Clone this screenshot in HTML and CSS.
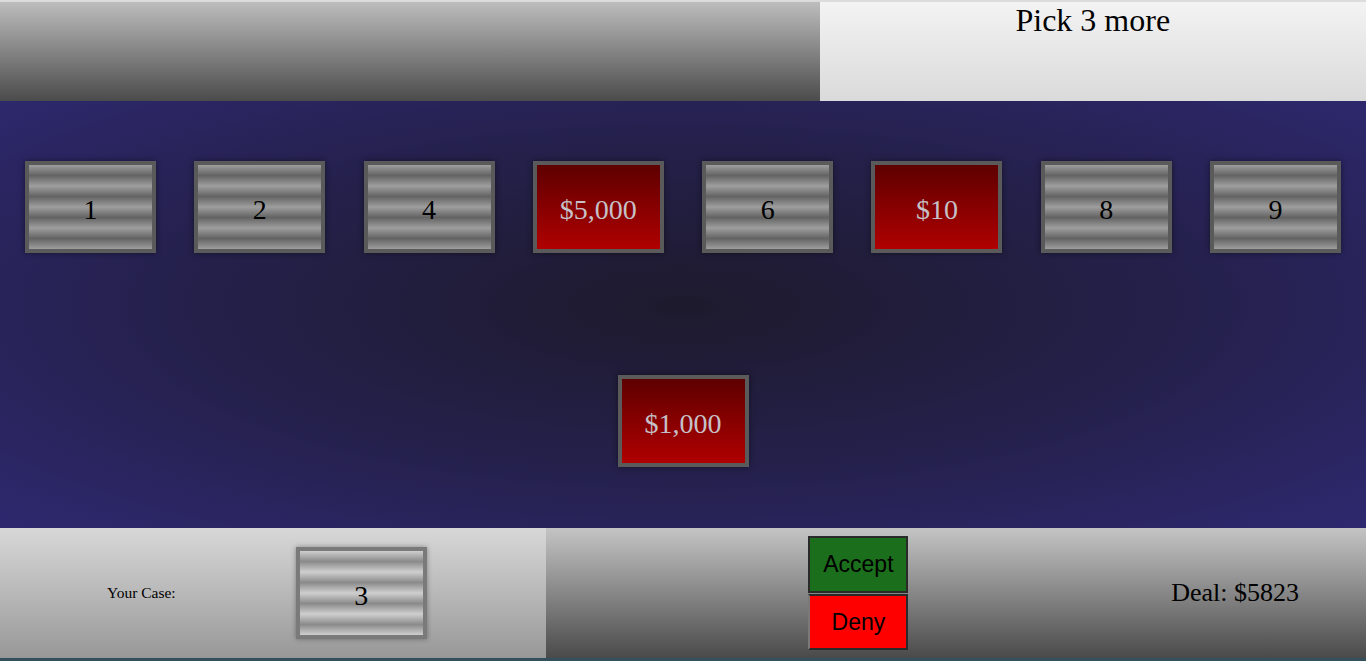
FILE: index.html
```html
<!DOCTYPE html>
<html lang="en">

<head>
    <meta charset="UTF-8">
    <meta name="viewport" content="width=device-width, initial-scale=1.0">
    <title>Deal or No Deal</title>
    <link rel="stylesheet" href="styles.css">
</head>

<body>
    <header class="top">
        <div class="banner"></div>
        <div class="status">
            <h1>Pick 3 more</h1>
        </div>
    </header>

    <main class="board">
        <div class="row">
            <div class="case">1</div>
            <div class="case">2</div>
            <div class="case">4</div>
            <div class="case opened">$5,000</div>
            <div class="case">6</div>
            <div class="case opened">$10</div>
            <div class="case">8</div>
            <div class="case">9</div>
        </div>
        <div class="row row-center">
            <div class="case opened">$1,000</div>
        </div>
    </main>

    <footer class="bottom">
        <div class="mine">
            <span class="mine-label">Your Case:</span>
            <div class="case case-mine">3</div>
        </div>
        <div class="offer">
            <div class="buttons">
                <button class="btn accept">Accept</button>
                <button class="btn deny">Deny</button>
            </div>
            <div class="deal">Deal: $5823</div>
        </div>
    </footer>
</body>

</html>
```

FILE: styles.css
```css
* {
    margin: 0;
    padding: 0;
    box-sizing: border-box;
}

html,
body {
    background: #34505c;
}

body {
    font-family: "Liberation Serif", "Times New Roman", serif;
    color: #000;
    height: 661px;
    overflow: hidden;
}

/* top bar */
.top {
    display: flex;
    height: 101px;
    border-top: 2px solid #dcdcdc;
}

.banner {
    width: 60%;
    background: linear-gradient(#bdbdbd, #4b4b4b);
}

.status {
    width: 40%;
    text-align: center;
    background: linear-gradient(#f3f3f3, #dadada);
}

.status h1 {
    font-size: 32px;
    font-weight: normal;
}

/* the cases */
.board {
    height: 427px;
    padding: 60px 25px 0;
    display: flex;
    flex-direction: column;
    gap: 122px;
    background: radial-gradient(ellipse at 50% 48%, #1e1a2d 0%, #24204a 50%, #2e296f 100%);
}

.row {
    display: flex;
    justify-content: space-between;
}

.row-center {
    justify-content: center;
}

.case {
    width: 131px;
    height: 92px;
    border: 4px solid #5a5a5a;
    padding-top: 6px;
    display: flex;
    align-items: center;
    justify-content: center;
    font-size: 28px;
    background: linear-gradient(#9e9e9e, #636363 50%, #9e9e9e) 0 0 / 100% 25%;
    box-shadow: 0 0 6px rgba(0, 0, 0, 0.45);
}

.case.opened {
    color: #c6c0c8;
    background: linear-gradient(#5e0000, #b00000);
}

/* bottom bar */
.bottom {
    display: flex;
    height: 130px;
}

.mine {
    width: 40%;
    display: flex;
    align-items: center;
    padding-left: 107px;
    gap: 120px;
    background: linear-gradient(#d8d8d8, #989898);
}

.mine-label {
    font-size: 15.5px;
}

.case-mine {
    border-color: #7a7a7a;
    background: linear-gradient(#cfcfcf, #8a8a8a 50%, #cfcfcf) 0 0 / 100% 25%;
    box-shadow: 0 0 5px rgba(0, 0, 0, 0.35);
}

.offer {
    width: 60%;
    display: flex;
    align-items: center;
    padding: 0 67px 0 262px;
    background: linear-gradient(#c4c4c4, #4a4a4a);
}

.buttons {
    display: flex;
    flex-direction: column;
    gap: 1px;
}

.btn {
    width: 100px;
    height: 57px;
    border: 2px solid #2a2a2a;
    font-family: "Liberation Sans", Arial, sans-serif;
    font-size: 23px;
    color: #000;
    cursor: pointer;
}

.accept {
    background-color: #1b6e1b;
}

.deny {
    height: 56px;
    background-color: #ff0000;
    border-left-color: #7a7a7a;
}

.deal {
    margin-left: auto;
    font-size: 26px;
}
```
